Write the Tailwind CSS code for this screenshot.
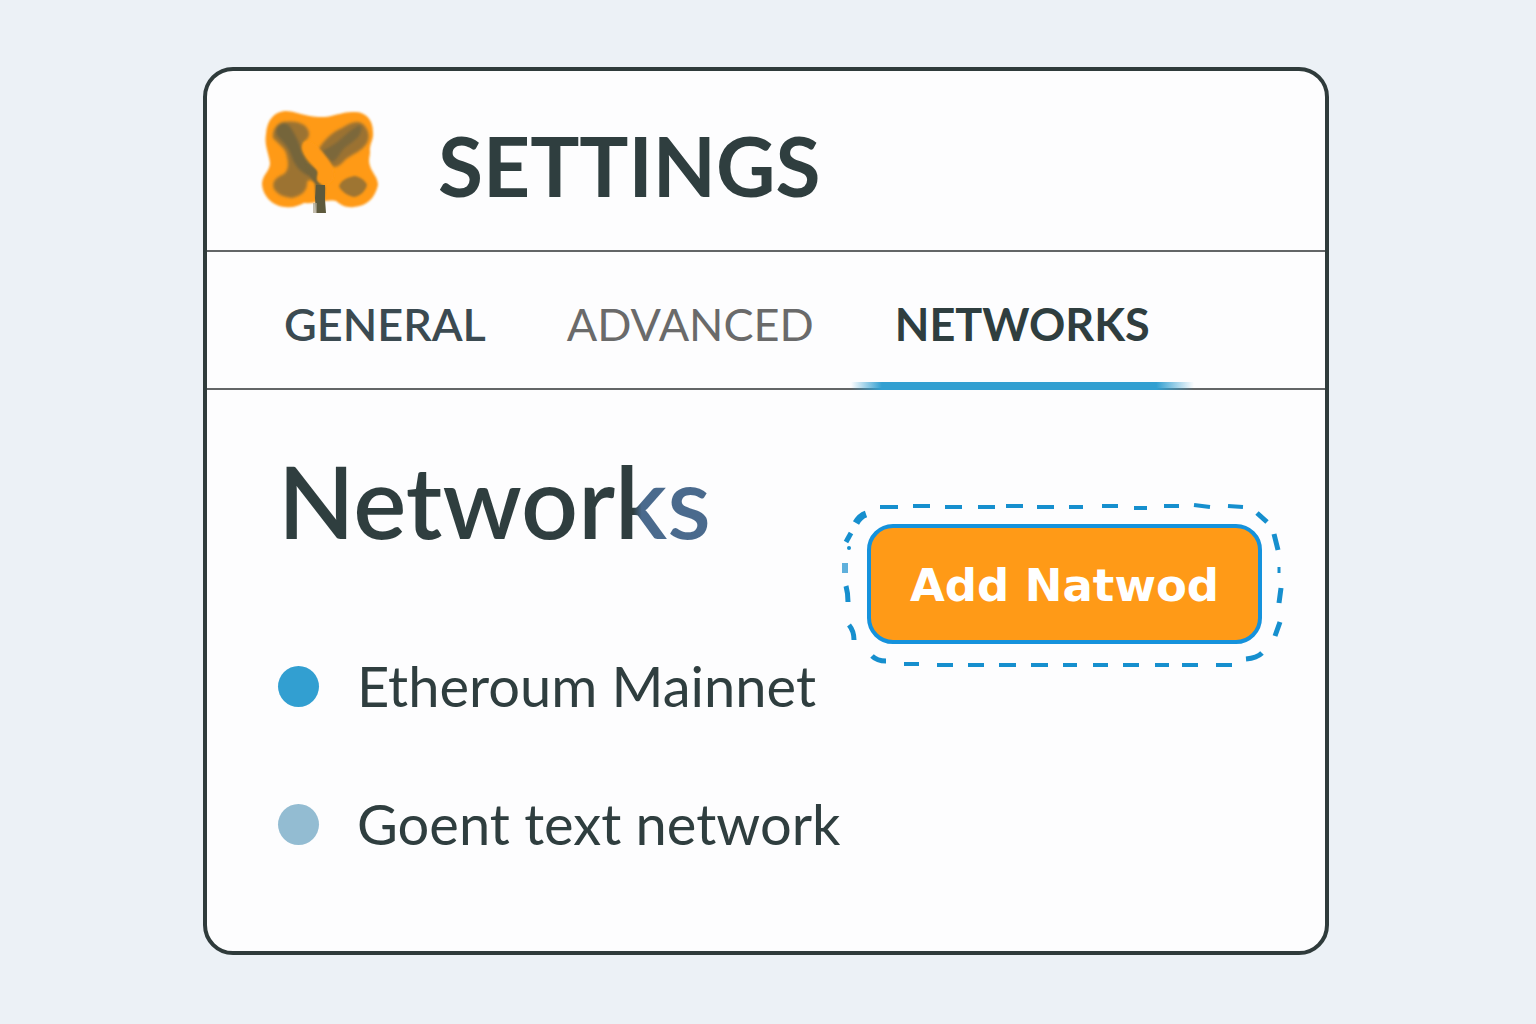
<!DOCTYPE html>
<html lang="en">
<head>
<meta charset="utf-8">
<meta name="viewport" content="width=device-width, initial-scale=1">
<title>Settings – Networks</title>
<script src="https://cdn.jsdelivr.net/npm/@tailwindcss/browser@4"></script>
</head>
<body class="min-h-screen bg-[#ecf1f6] pt-[67px] pr-[207px] pb-[69px] pl-[203px] font-['Lato',sans-serif] text-[#2f3e3f]">
<main class="rounded-[30px] border-4 border-[#2f3b3b] bg-[#fdfdfe]">
  <header class="flex h-[181px] items-center gap-[54px] border-b-2 border-[#636667] pl-[53px]">
    <svg class="h-[112px] w-[124px] shrink-0" viewBox="0 0 124 112" aria-hidden="true">
      <defs>
        <filter id="edge" x="-20%" y="-20%" width="140%" height="140%"><feGaussianBlur stdDeviation="1.2"/></filter>
        <filter id="smudge" x="-30%" y="-30%" width="160%" height="160%"><feGaussianBlur stdDeviation="1.8"/></filter>
      </defs>
      <path filter="url(#edge)" fill="#ff9a17" d="M25 6C35 6 44 11 58 12S82 6 95 7c11 0 18 8 18 20 1 8-4 12-3 20 0 5-2 7 0 14 2 7 8 11 8 19-3 13-11 21-24 22-8 1-13-2-18-6-11-2-20 3-32 2-6 3-11 5-19 4C12 101 2 90 2 78c1-9 8-12 8-20-1-9-6-18-4-29C7 15 14 7 25 6Z"/>
      <g filter="url(#smudge)">
        <path fill="#9c7331" d="M23 17c7-1 15-1 21 3 5 4 7 10 3 14-3 3-6 6-5 11 2 8 9 14 15 20 1 5 1 9-2 11-4 0-8-3-8 3 0 7-6 12-15 14-8-1-14-3-18-9-3-8 3-12 10-15 6-5 4-14 2-21-2-6-9-10-13-15-1-7 3-14 10-16Z"/>
        <path fill="#75653a" d="M20 19c6-3 10 1 14 9 4 6 6 13 9 20 4 8 9 13 14 20 0 4-4 5-8 3-8-3-14-10-17-18-3-9-6-13-12-19-6-5-5-12 0-15Z"/>
        <path fill="#9b7231" d="M58 45c4-7 12-17 24-22 8-5 16-9 22-3 5 6 6 12 3 18-5 8-14 11-21 16-4 4-7 8-12 8-5-3-12-11-16-17Z"/>
        <path fill="#7b673a" d="M101 20c2 10-5 15-14 21-6 4-9 13-14 16-4-2-9-7-11-11 8-4 15-8 21-14 6-5 12-11 18-12Z"/>
      </g>
      <path filter="url(#edge)" fill="#9e7431" d="M79 81c2-6 9-9 16-10 5 1 10 4 12 9-2 7-7 11-13 12-5-1-13-5-15-11Z"/>
      <path filter="url(#edge)" fill="#75653a" d="M46 58l12 8-1 9 5 5 3 2-1 12-8 0-1-15-5-8Z"/>
      <path filter="url(#edge)" fill="#ff9a17" d="M44 37c6-3 14 4 20 12 6 7 10 14 10 22-1 6-5 9-10 8-6-1-8-5-6-10 0-6-6-10-10-15-4-6-7-12-4-17Z"/>
      <path fill="#5d593c" d="M56 80h9v14l1 14-10 0-1-15Z"/>
      <path fill="#aaa18c" opacity=".7" d="M53 98h4v10h-4Z"/>
    </svg>
    <h1 class="pt-2 text-[82px]/[100px] font-bold">SETTINGS</h1>
  </header>

  <nav class="flex h-[138px] items-center gap-[81px] border-b-2 border-[#636667] pt-2 pl-[77px] text-[45px]/[60px]" aria-label="Settings sections">
    <a href="#general" class="font-semibold text-[#3b4a51]">GENERAL</a>
    <a href="#advanced" class="font-normal text-[#6a6a6a]">ADVANCED</a>
    <a href="#networks" aria-current="page" class="relative font-bold">NETWORKS
      <span class="absolute inset-x-[-44px] -bottom-9 h-2 bg-[linear-gradient(to_right,transparent,#329fd1_9%,#329fd1_89%,transparent)]"></span>
    </a>
  </nav>

  <section id="networks" class="flex justify-between pt-[60px] pr-[39px] pb-[97px] pl-[71px]">
    <div class="min-w-0">
      <h2 class="w-fit bg-linear-to-r from-[#2f3e3f] from-82% to-[#4a6a8d] to-84% bg-clip-text text-[100px]/[100px] font-semibold text-transparent">Networks</h2>
      <ul class="mt-[106px] flex flex-col gap-[78px] text-[56px]/[60px] whitespace-nowrap">
        <li class="flex items-center gap-[38px]"><span class="size-[41px] shrink-0 rounded-full bg-[#329fd1]"></span>Etheroum Mainnet</li>
        <li class="flex items-center gap-[38px]"><span class="size-[41px] shrink-0 rounded-full bg-[#93bcd2]"></span>Goent text network</li>
      </ul>
    </div>

    <div class="relative mt-[50px] h-[170px] w-[446px] shrink-0 pt-6 pr-6 pb-[26px] pl-[27px]">
      <svg class="pointer-events-none absolute inset-0 h-full w-full" viewBox="0 0 446 170" fill="none" stroke="#168fce" stroke-width="4" stroke-linecap="butt" aria-hidden="true">
        <path d="M40 7h18M73 6h17M105 7h17M138 7h17M166 6h17M197 7h17M229 7h14M262 6h16M294 8h13M324 6h15M354 5l16 2M388 6l15 1"/>
        <path stroke-width="5" d="M417 13l10 9M434 34l4 16M441 88l-2 15M440 122l-5 14M422 153q-5 5-16 6"/>
        <path stroke-width="3" d="M439 67v6"/>
        <path d="M392 165h-16M358 165h-16M329 165h-14M299 165h-16M268 165h-15M237 165h-14M208 165h-17M176 165h-17M144 165h-16M113 165h-16M79 164h-15"/>
        <path stroke-width="5" d="M46 161q-9 0-14-5M14 140q0-9-5-15M8 102q0-9-2-16"/>
        <path stroke-width="6" stroke="#5fb0dc" d="M5 63v10"/>
        <path stroke-width="5" d="M11 33l-5 9"/>
        <path stroke-width="7" d="M26 14q-6 2-10 9"/>
        <circle cx="9" cy="48" r="2" fill="#168fce" stroke="none"/>
      </svg>
      <button type="button" class="h-full w-full rounded-[26px] border-4 border-[#1592dc] bg-[#ff9a17] pt-1 font-['DejaVu_Sans',sans-serif] text-[45px]/[50px] font-bold whitespace-nowrap text-white">Add Natwod</button>
    </div>
  </section>
</main>
</body>
</html>
